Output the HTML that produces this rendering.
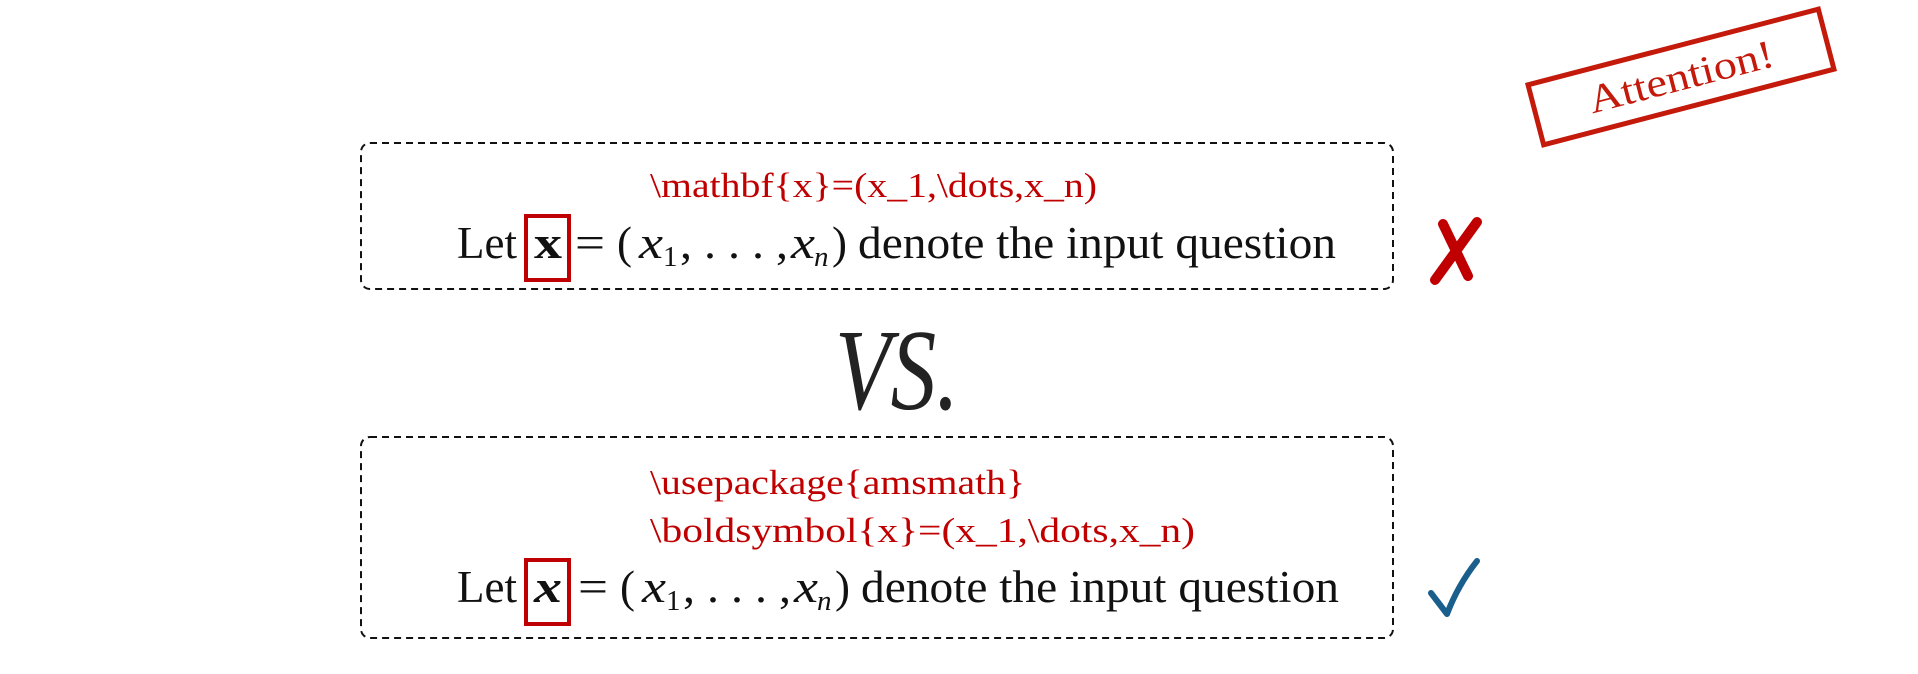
<!DOCTYPE html>
<html><head><meta charset="utf-8"><style>
html,body{margin:0;padding:0;background:#fff;width:1918px;height:674px;overflow:hidden}
svg{display:block}
text{font-family:"Liberation Serif",serif}
</style></head><body>
<svg width="1918" height="674" viewBox="0 0 1918 674" xmlns="http://www.w3.org/2000/svg">
<!-- box 1 -->
<rect x="361" y="143" width="1032" height="146" rx="9" fill="none" stroke="#111" stroke-width="2" stroke-dasharray="7,5"/>
<text x="650" y="197" font-size="35" fill="#c00000" textLength="447" lengthAdjust="spacingAndGlyphs">\mathbf{x}=(x_1,\dots,x_n)</text>
<g fill="#111" font-size="45">
<text x="457" y="258" textLength="60" lengthAdjust="spacingAndGlyphs">Let</text>
<text x="534" y="258" font-weight="bold" textLength="28" lengthAdjust="spacingAndGlyphs">x</text>
<text x="575" y="258" textLength="30" lengthAdjust="spacingAndGlyphs">=</text>
<text x="617" y="258">(</text>
<text x="639" y="258" font-style="italic" textLength="24" lengthAdjust="spacingAndGlyphs">x</text>
<text x="663" y="266" font-size="29">1</text>
<text x="680" y="258" textLength="108" lengthAdjust="spacingAndGlyphs">, . . . ,</text>
<text x="791" y="258" font-style="italic" textLength="24" lengthAdjust="spacingAndGlyphs">x</text>
<text x="814" y="266" font-size="29" font-style="italic">n</text>
<text x="832" y="258">)</text>
<text x="858" y="258" textLength="478" lengthAdjust="spacingAndGlyphs">denote the input question</text>
</g>
<rect x="526" y="216" width="43" height="64" fill="none" stroke="#c00000" stroke-width="4"/>
<!-- X mark -->
<path d="M1443 224 L1468 276 M1477 222 L1435 280" stroke="#c00000" stroke-width="10" stroke-linecap="round" fill="none"/>
<!-- VS -->
<text x="835" y="409" font-size="115" font-style="italic" fill="#222" textLength="124" lengthAdjust="spacingAndGlyphs">VS.</text>
<!-- box 2 -->
<rect x="361" y="437" width="1032" height="201" rx="9" fill="none" stroke="#111" stroke-width="2" stroke-dasharray="7,5"/>
<text x="650" y="494" font-size="35" fill="#c00000" textLength="375" lengthAdjust="spacingAndGlyphs">\usepackage{amsmath}</text>
<text x="650" y="542" font-size="35" fill="#c00000" textLength="545" lengthAdjust="spacingAndGlyphs">\boldsymbol{x}=(x_1,\dots,x_n)</text>
<g fill="#111" font-size="45">
<text x="457" y="602" textLength="60" lengthAdjust="spacingAndGlyphs">Let</text>
<text x="534" y="602" font-weight="bold" font-style="italic" textLength="28" lengthAdjust="spacingAndGlyphs">x</text>
<text x="578" y="602" textLength="30" lengthAdjust="spacingAndGlyphs">=</text>
<text x="620" y="602">(</text>
<text x="642" y="602" font-style="italic" textLength="24" lengthAdjust="spacingAndGlyphs">x</text>
<text x="666" y="610" font-size="29">1</text>
<text x="683" y="602" textLength="108" lengthAdjust="spacingAndGlyphs">, . . . ,</text>
<text x="794" y="602" font-style="italic" textLength="24" lengthAdjust="spacingAndGlyphs">x</text>
<text x="817" y="610" font-size="29" font-style="italic">n</text>
<text x="835" y="602">)</text>
<text x="861" y="602" textLength="478" lengthAdjust="spacingAndGlyphs">denote the input question</text>
</g>
<rect x="526" y="560" width="43" height="64" fill="none" stroke="#c00000" stroke-width="4"/>
<!-- check -->
<path d="M1431 593 L1447 614 Q1458 585 1477 561" stroke="#1a5e8c" stroke-width="6" stroke-linecap="round" stroke-linejoin="round" fill="none"/>
<!-- attention stamp -->
<g transform="translate(1681,77) rotate(-14.6)">
<rect x="-150" y="-31" width="300" height="62" fill="none" stroke="#c41a0c" stroke-width="5"/>
<text x="0" y="13" font-size="40" fill="#c41a0c" text-anchor="middle" textLength="190" lengthAdjust="spacingAndGlyphs">Attention!</text>
</g>
</svg>
</body></html>
